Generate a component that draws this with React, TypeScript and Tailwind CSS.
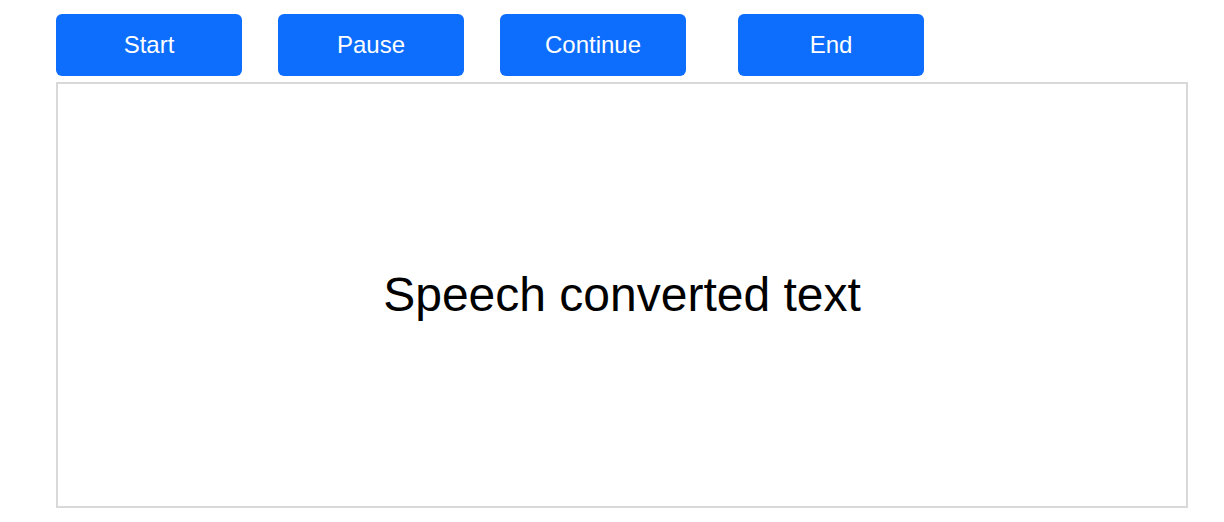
const buttons = [
  { label: "Start", gap: "ml-0" },
  { label: "Pause", gap: "ml-[36px]" },
  { label: "Continue", gap: "ml-[36px]" },
  { label: "End", gap: "ml-[52px]" },
];

const App = () => {
  return (
    <div
      className="bg-white min-h-[522px] pt-[14px] pl-[56px] pr-[36px]"
      style={{ fontFamily: '"Liberation Sans", Arial, sans-serif' }}
    >
      <div className="flex">
        {buttons.map((b) => (
          <button
            key={b.label}
            className={`${b.gap} w-[186px] h-[62px] rounded-[6px] bg-[#0d6efd] text-white text-[24px] leading-none`}
          >
            {b.label}
          </button>
        ))}
      </div>
      <div className="mt-[6px] h-[426px] border-2 border-[#d9d9d9] flex items-center justify-center">
        <p className="text-[48px] text-black leading-none">Speech converted text</p>
      </div>
    </div>
  );
};

export default App;
